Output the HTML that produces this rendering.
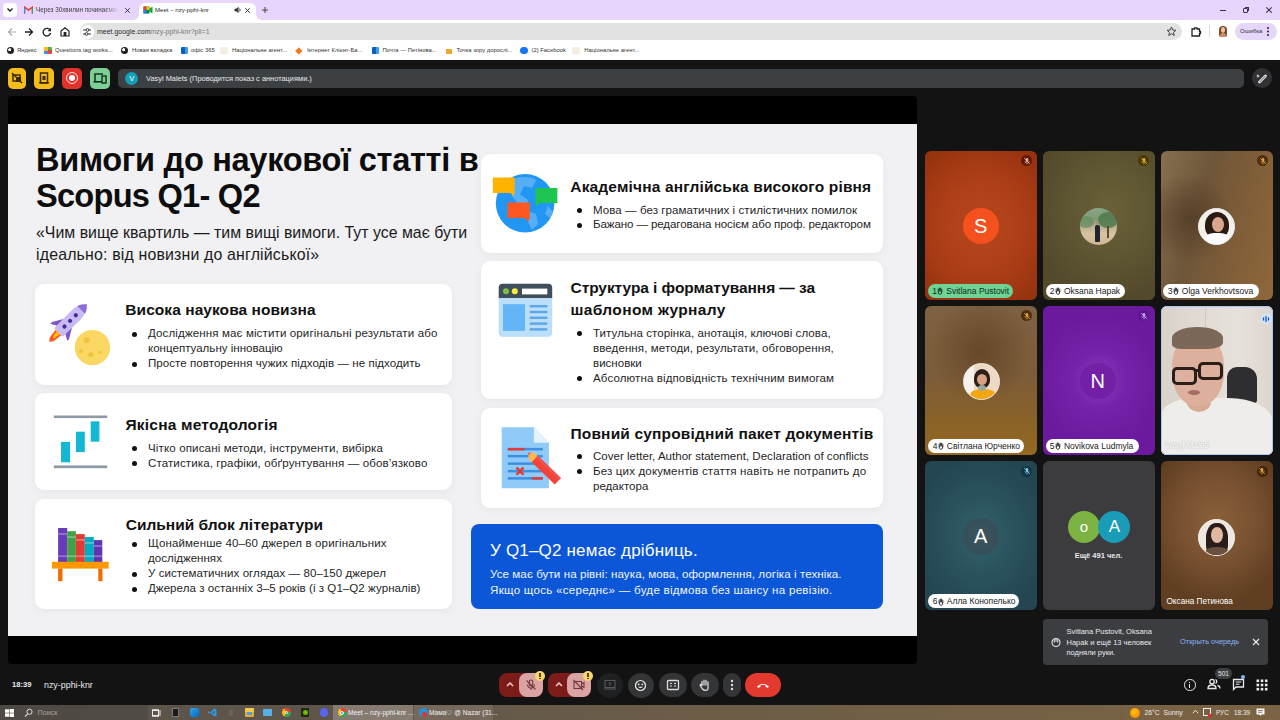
<!DOCTYPE html>
<html><head><meta charset="utf-8">
<style>
*{margin:0;padding:0;box-sizing:border-box}
html,body{width:1280px;height:720px;overflow:hidden;background:#131314;font-family:"Liberation Sans",sans-serif;position:relative}
.a{position:absolute}
.nw{white-space:nowrap}
#tabs{left:0;top:0;width:1280px;height:20px;background:#e8d5fb}
#toolbar{left:0;top:20px;width:1280px;height:40px;background:#fff}
#addr{left:80px;top:23px;width:1102px;height:17px;border-radius:9px;background:#e2e2e2}
#video{left:8px;top:96px;width:909px;height:568px;background:#000;border-radius:4px}
#slide{left:8px;top:124px;width:909px;height:512px;background:#f1f1f3}
.card{position:absolute;background:#fff;border-radius:9px;box-shadow:0 2px 8px rgba(0,0,0,.05)}
.ct{position:absolute;margin-top:0.8px;font-weight:bold;font-size:15.5px;line-height:22.5px;color:#111;white-space:nowrap}
.ul{position:absolute;font-size:11.55px;color:#1f1f1f;line-height:15px}
.ul div{position:relative;white-space:nowrap}
.ul div.b:before{content:"";position:absolute;left:-16.2px;top:5.6px;width:5px;height:5px;border-radius:50%;background:#111}
#taskbar{left:0;top:705px;width:1280px;height:15px;background:linear-gradient(90deg,#5a5249 0%,#5f564b 25%,#6a5c48 50%,#736045 75%,#7b6344 100%)}
.tile{position:absolute;border-radius:6px;overflow:hidden}
.name{position:absolute;left:3px;top:133px;height:14.5px;border-radius:7.5px;background:#fff;color:#111;font-size:9px;line-height:14.5px;padding:0 5px;white-space:nowrap}
.bk{position:absolute;top:4.8px;width:7.6px;height:7.6px;border-radius:50%}
.pill{position:absolute;height:14px;border-radius:7px;font-size:8.5px;line-height:14px;white-space:nowrap}
.av{position:absolute;border-radius:50%;color:#fff;text-align:center;overflow:hidden}
</style></head><body>
<div id="tabs" class="a"></div>
<div id="toolbar" class="a"></div>
<div id="addr" class="a"></div>

<!-- browser chrome -->
<div class="a" style="left:3px;top:3px;width:14px;height:14px;border-radius:4px;background:#fff"></div>
<svg class="a" style="left:6px;top:7px" width="8" height="6"><path d="M1.5,1.5 L4,4 L6.5,1.5" stroke="#222" stroke-width="1.4" fill="none"/></svg>
<!-- gmail tab -->
<svg class="a" style="left:24px;top:6px" width="9" height="8" viewBox="0 0 9 8"><path d="M0.5,7.5 V1 L4.5,4.2 L8.5,1 V7.5" stroke="#ea4335" stroke-width="1.5" fill="none"/><path d="M0.5,7.5 V2" stroke="#4285f4" stroke-width="1.5"/><path d="M8.5,7.5 V2" stroke="#34a853" stroke-width="1.5"/></svg>
<div class="a nw" style="left:36px;top:5px;font-size:6.3px;line-height:10px;color:#3a3a3a;width:84px;overflow:hidden;-webkit-mask-image:linear-gradient(90deg,#000 80%,transparent)">Через 30хвилин починаємо! ·</div>
<svg class="a" style="left:124px;top:6.5px" width="7" height="7"><path d="M1.3,1.3 L5.7,5.7 M5.7,1.3 L1.3,5.7" stroke="#333" stroke-width="1"/></svg>
<!-- active tab -->
<div class="a" style="left:139px;top:3px;width:117px;height:18px;border-radius:6px 6px 0 0;background:#fff"></div>
<div class="a" style="left:133px;top:14px;width:6px;height:6px;background:radial-gradient(circle at 0 0,#e8d5fb 6px,#fff 6px)"></div>
<div class="a" style="left:256px;top:14px;width:6px;height:6px;background:radial-gradient(circle at 100% 0,#e8d5fb 6px,#fff 6px)"></div>
<svg class="a" style="left:143px;top:5px" width="10" height="10" viewBox="0 0 10 10"><rect x="0.5" y="1.5" width="6" height="7" fill="#00832d"/><rect x="0.5" y="1.5" width="3" height="3.5" fill="#ea4335"/><rect x="3.5" y="1.5" width="3" height="3.5" fill="#fbbc04"/><rect x="0.5" y="5" width="3" height="3.5" fill="#2684fc"/><path d="M6.5,3.5 L9.5,1.5 V8.5 L6.5,6.5 Z" fill="#00ac47"/></svg>
<div class="a nw" style="left:155px;top:5px;font-size:6.1px;line-height:10px;color:#2a2a2a">Meet – nzy-pphi-knr</div>
<svg class="a" style="left:234px;top:6px" width="8" height="8" viewBox="0 0 8 8"><path d="M0.5,2.8 H2.2 L4.5,0.8 V7.2 L2.2,5.2 H0.5 Z" fill="#333"/><path d="M5.6,2.5 Q6.8,4 5.6,5.5" stroke="#333" stroke-width="0.9" fill="none"/></svg>
<svg class="a" style="left:243.5px;top:6.5px" width="7" height="7"><path d="M1.3,1.3 L5.7,5.7 M5.7,1.3 L1.3,5.7" stroke="#333" stroke-width="1"/></svg>
<svg class="a" style="left:261px;top:6px" width="8" height="8"><path d="M4,1 V7 M1,4 H7" stroke="#444" stroke-width="1"/></svg>
<!-- window controls -->
<div class="a" style="left:1219.5px;top:9.6px;width:6px;height:1.1px;background:#3d3050"></div>
<div class="a" style="left:1243px;top:8.2px;width:4.6px;height:4.6px;border:1.1px solid #3d3050;border-radius:1px"></div><div class="a" style="left:1244.5px;top:7px;width:4px;height:4px;border-top:1.1px solid #3d3050;border-right:1.1px solid #3d3050;border-radius:0 1px 0 0"></div>
<svg class="a" style="left:1264.5px;top:6px" width="8" height="8"><path d="M1.3,1.3 L6.7,6.7 M6.7,1.3 L1.3,6.7" stroke="#3d3050" stroke-width="1.1"/></svg>
<!-- nav -->
<svg class="a" style="left:6px;top:26px" width="12" height="12" viewBox="0 0 12 12"><path d="M10,6 H2.5 M6,2.5 L2.5,6 L6,9.5" stroke="#a9a9a9" stroke-width="1.2" fill="none"/></svg>
<svg class="a" style="left:23px;top:26px" width="12" height="12" viewBox="0 0 12 12"><path d="M2,6 H9.5 M6,2.5 L9.5,6 L6,9.5" stroke="#222" stroke-width="1.3" fill="none"/></svg>
<svg class="a" style="left:41px;top:25.5px" width="12" height="12" viewBox="0 0 12 12"><path d="M9.3,4.5 A3.8,3.8 0 1 0 9.6,7" stroke="#222" stroke-width="1.3" fill="none"/><path d="M9.8,2 V5 H6.8" fill="#222"/><path d="M10,2.2 L10,5.2 L7,5.2 Z" fill="#222"/></svg>
<svg class="a" style="left:59px;top:25.5px" width="12" height="12" viewBox="0 0 12 12"><path d="M2,10 V5 L6,1.8 L10,5 V10 Z" stroke="#222" stroke-width="1.2" fill="none"/><rect x="4.6" y="6" width="2.8" height="4" fill="#222"/></svg>
<div class="a" style="left:80.5px;top:24.5px;width:13px;height:14px;border-radius:50%;background:#fff"></div><svg class="a" style="left:81px;top:25.5px" width="12" height="12" viewBox="0 0 12 12"><path d="M2,4 H5 M8,4 H10 M2,8 H4 M7,8 H10" stroke="#333" stroke-width="1.2"/><circle cx="6.5" cy="4" r="1.4" stroke="#333" fill="none" stroke-width="1"/><circle cx="5.5" cy="8" r="1.4" stroke="#333" fill="none" stroke-width="1"/></svg>
<div class="a nw" style="left:97px;top:26px;font-size:6.97px;line-height:11px;color:#2b2b2b">meet.google.com<span style="color:#777">/nzy-pphi-knr?pli=1</span></div>
<svg class="a" style="left:1166px;top:26px" width="11" height="11" viewBox="0 0 12 12"><path d="M6,1.2 L7.4,4.4 L10.8,4.7 L8.2,6.9 L9,10.3 L6,8.5 L3,10.3 L3.8,6.9 L1.2,4.7 L4.6,4.4 Z" stroke="#333" stroke-width="1" fill="none"/></svg>
<svg class="a" style="left:1190px;top:25.5px" width="12" height="12" viewBox="0 0 12 12"><path d="M2,3 H4.5 V1.8 H7 V3 H9.5 V5.5 H10.5 V7.5 H9.5 V10 H2 Z" stroke="#222" stroke-width="1.3" fill="none"/></svg>
<div class="a" style="left:1209px;top:25px;width:1px;height:12px;background:#ddd"></div>
<div class="a" style="left:1219px;top:25.5px;width:8px;height:11px;border-radius:4px 4px 2px 2px;background:#7a4a2a"></div><div class="a" style="left:1220.8px;top:27px;width:4.4px;height:6px;border-radius:50%;background:#eec2a4"></div><div class="a" style="left:1220px;top:33px;width:6px;height:3.5px;border-radius:3px 3px 0 0;background:#c98d6a"></div>
<div class="a" style="left:1234.5px;top:23px;width:42px;height:17px;border-radius:9px;background:#e6d6fa"></div>
<div class="a nw" style="left:1240px;top:27px;font-size:6px;line-height:9px;color:#333">Ошибка</div>
<svg class="a" style="left:1266px;top:26px" width="4" height="11"><circle cx="2" cy="2" r="1.1" fill="#333"/><circle cx="2" cy="5.5" r="1.1" fill="#333"/><circle cx="2" cy="9" r="1.1" fill="#333"/></svg>
<!-- bookmarks -->
<div class="a" style="left:0;top:42px;width:1280px;height:17px;font-size:5.85px;line-height:17px;color:#333">
 <i class="bk" style="left:6.5px;background:radial-gradient(circle at 40% 40%,#fff 0 1.3px,#222 1.8px)"></i><span class="a nw" style="left:17px">Яндекс</span>
 <i class="bk" style="left:44px;border-radius:1px;background:conic-gradient(#4caf50 0 25%,#ea4335 0 50%,#4285f4 0 75%,#fbbc04 0)"></i><span class="a nw" style="left:55px">Questions tag works...</span>
 <i class="bk" style="left:120.8px;background:radial-gradient(circle at 40% 40%,#fff 0 1.3px,#222 1.8px)"></i><span class="a nw" style="left:132px">Новая вкладка</span>
 <i class="bk" style="left:180.5px;border-radius:1px;background:linear-gradient(90deg,#0a5fc0 0 55%,#3c9be8 55%)"></i><span class="a nw" style="left:191px">офіс 365</span>
 <i class="bk" style="left:220px;border-radius:1px;background:#f1ead8;opacity:.8"></i><span class="a nw" style="left:232px">Національне агент...</span>
 <i class="bk" style="left:295px;border-radius:1px;background:#f47a20;transform:rotate(45deg) scale(.65)"></i><span class="a nw" style="left:307px">Інтернет Клієнт-Ба...</span>
 <i class="bk" style="left:371.5px;border-radius:1px;background:linear-gradient(90deg,#0a5fc0 0 55%,#3c9be8 55%)"></i><span class="a nw" style="left:382.4px">Почта — Петінова...</span>
 <i class="bk" style="left:446px;border-radius:0;background:linear-gradient(#fff 0 35%,#f0a830 35%);width:6px"></i><span class="a nw" style="left:456.4px">Точка зору дорослі...</span>
 <i class="bk" style="left:520px;background:#1877f2"></i><span class="a nw" style="left:531.5px">(2) Facebook</span>
 <i class="bk" style="left:572px;border-radius:1px;background:#f1ead8;opacity:.8"></i><span class="a nw" style="left:584.3px">Національне агент...</span>
</div>

<!-- meet top bar -->
<div class="a" style="left:8px;top:68px;width:18px;height:20.5px;border-radius:5px;background:#f6bd1a"></div>
<svg class="a" style="left:11px;top:72px" width="12" height="12" viewBox="0 0 12 12"><rect x="2" y="3" width="7" height="6" fill="none" stroke="#3a2a00" stroke-width="1.5"/><path d="M1,1 L11,11" stroke="#3a2a00" stroke-width="1.4"/><rect x="5" y="5" width="5" height="5" fill="#3a2a00"/></svg>
<div class="a" style="left:34px;top:68px;width:20px;height:20.5px;border-radius:5px;background:#f6bd1a"></div>
<svg class="a" style="left:38px;top:72px" width="12" height="12" viewBox="0 0 12 12"><rect x="2.5" y="1" width="7" height="10" fill="none" stroke="#3a2a00" stroke-width="1.5"/><rect x="4.5" y="4" width="3" height="4" fill="#3a2a00"/><rect x="1" y="10" width="10" height="1.3" fill="#3a2a00"/></svg>
<div class="a" style="left:62px;top:68px;width:20px;height:20.5px;border-radius:5px;background:#e0332c"></div>
<div class="a" style="left:65.8px;top:72px;width:12.4px;height:12.4px;border-radius:50%;border:1.6px solid #f6e0de"></div>
<div class="a" style="left:68.8px;top:75px;width:6.4px;height:6.4px;border-radius:50%;background:#fff"></div>
<div class="a" style="left:90px;top:68px;width:20px;height:20.5px;border-radius:5px;background:#7ecf95"></div>
<svg class="a" style="left:93px;top:72px" width="14" height="12" viewBox="0 0 14 12"><path d="M2,9 V2 H10" stroke="#10301a" stroke-width="1.5" fill="none"/><rect x="0.5" y="9" width="8" height="1.6" fill="#10301a"/><rect x="9" y="4" width="4" height="7" fill="none" stroke="#10301a" stroke-width="1.4"/></svg>
<div class="a" style="left:118px;top:68.5px;width:1126px;height:19.5px;border-radius:5px;background:#3c4043"></div>
<div class="a" style="left:125.3px;top:72.2px;width:13px;height:13px;border-radius:50%;background:#12a0b8;color:#fff;font-size:7.5px;line-height:13px;text-align:center">V</div>
<div class="a nw" style="left:146px;top:73px;font-size:7.43px;line-height:11px;color:#e8eaed">Vasyl Malets (Проводится показ с аннотациями.)</div>
<div class="a" style="left:1252px;top:68.3px;width:20px;height:20px;border-radius:50%;background:#303134"></div>
<svg class="a" style="left:1255px;top:71.5px" width="14" height="14" viewBox="0 0 14 14"><path d="M4.5,10 L10.5,4" stroke="#eee" stroke-width="2.6" stroke-linecap="round"/><path d="M4.5,10 L10.5,4" stroke="#303134" stroke-width="0.8"/><path d="M3,2 L3.6,3.4 L5,4 L3.6,4.6 L3,6 L2.4,4.6 L1,4 L2.4,3.4 Z" fill="#eee"/></svg>

<div id="video" class="a"></div>
<div id="slide" class="a"></div>

<!-- title -->
<div class="a nw" style="left:36px;top:141.5px;font-size:32.6px;font-weight:bold;line-height:36px;letter-spacing:-0.32px;color:#0d0d0d">Вимоги до наукової статті в<br><span style="letter-spacing:-0.75px">Scopus Q1- Q2</span></div>
<div class="a nw" style="left:36px;top:222px;font-size:15.9px;line-height:21.5px;color:#1a1a1a">«Чим вище квартиль — тим вищі вимоги. Тут усе має бути<br><span style="letter-spacing:0.167px">ідеально: від новизни до англійської»</span></div>

<!-- left cards -->
<div class="card" style="left:35px;top:283.5px;width:417px;height:101px"></div>
<div class="card" style="left:35px;top:392.7px;width:417px;height:97.3px"></div>
<div class="card" style="left:35px;top:499px;width:417px;height:110px"></div>
<!-- right cards -->
<div class="card" style="left:480.5px;top:153.5px;width:402px;height:99.3px"></div>
<div class="card" style="left:480.5px;top:261px;width:402px;height:138px"></div>
<div class="card" style="left:480.5px;top:408px;width:402px;height:100px"></div>
<div class="a" style="left:471px;top:523.7px;width:411.5px;height:85.5px;background:#0b57d8;border-radius:8px"></div>

<div class="ct" style="left:125.3px;top:298.4px"><span style="letter-spacing:0.060px">Висока наукова новизна</span></div>
<div class="ul" style="left:148px;top:326px">
  <div class="b"><span style="letter-spacing:0.117px">Дослідження має містити оригінальні результати або</span></div>
  <div>концептуальну інновацію</div>
  <div class="b"><span style="letter-spacing:0.043px">Просте повторення чужих підходів — не підходить</span></div>
</div>
<div class="ct" style="left:125.5px;top:413.4px"><span style="letter-spacing:0.206px">Якісна методологія</span></div>
<div class="ul" style="left:148px;top:440.5px">
  <div class="b"><span style="letter-spacing:0.134px">Чітко описані методи, інструменти, вибірка</span></div>
  <div class="b"><span style="letter-spacing:0.101px">Статистика, графіки, обґрунтування — обов’язково</span></div>
</div>
<div class="ct" style="left:125.7px;top:513.4px"><span style="letter-spacing:0.011px">Сильний блок літератури</span></div>
<div class="ul" style="left:148px;top:536px">
  <div class="b"><span style="letter-spacing:0.115px">Щонайменше 40–60 джерел в оригінальних</span></div>
  <div>дослідженнях</div>
  <div class="b"><span style="letter-spacing:0.053px">У систематичних оглядах — 80–150 джерел</span></div>
  <div class="b"><span style="letter-spacing:0.047px">Джерела з останніх 3–5 років (і з Q1–Q2 журналів)</span></div>
</div>

<div class="ct" style="left:570.3px;top:175.4px"><span style="letter-spacing:0.157px">Академічна англійська високого рівня</span></div>
<div class="ul" style="left:593px;top:202.75px;line-height:14.5px">
  <div class="b"><span style="letter-spacing:0.051px">Мова — без граматичних і стилістичних помилок</span></div>
  <div class="b"><span style="letter-spacing:-0.103px">Бажано — редагована носієм або проф. редактором</span></div>
</div>
<div class="ct" style="left:570.5px;top:275.9px"><span style="letter-spacing:-0.062px">Структура і форматування — за</span><br><span style="letter-spacing:0.367px">шаблоном журналу</span></div>
<div class="ul" style="left:593px;top:325.5px">
  <div class="b"><span style="letter-spacing:0.054px">Титульна сторінка, анотація, ключові слова,</span></div>
  <div><span style="letter-spacing:0.085px">введення, методи, результати, обговорення,</span></div>
  <div>висновки</div>
  <div class="b"><span style="letter-spacing:0.106px">Абсолютна відповідність технічним вимогам</span></div>
</div>
<div class="ct" style="left:570.5px;top:422.1px"><span style="letter-spacing:0.162px">Повний супровідний пакет документів</span></div>
<div class="ul" style="left:593px;top:448.5px">
  <div class="b"><span style="letter-spacing:0.005px">Cover letter, Author statement, Declaration of conflicts</span></div>
  <div class="b"><span style="letter-spacing:0.144px">Без цих документів стаття навіть не потрапить до</span></div>
  <div>редактора</div>
</div>

<div class="a nw" style="left:490px;top:541.2px;font-size:17px;line-height:20px;color:#fff"><span style="letter-spacing:0.186px">У Q1–Q2 немає дрібниць.</span></div>
<div class="a nw" style="left:490px;top:566.1px;font-size:11.6px;line-height:15.75px;color:#f2f5ff"><span style="letter-spacing:0.067px">Усе має бути на рівні: наука, мова, оформлення, логіка і техніка.</span><br><span style="letter-spacing:0.260px">Якщо щось «середнє» — буде відмова без шансу на ревізію.</span></div>


<!-- slide icons -->
<svg class="a" style="left:0;top:0" width="1280" height="720" viewBox="0 0 1280 720">
  <!-- rocket -->
  <g transform="translate(72.6,318.4) rotate(45)">
    <path d="M-4,20 L4,20 L2.5,30 L0,33 L-2.5,30 Z" fill="#ff5722"/>
    <path d="M-2.2,20 L2.2,20 L1.2,26 L0,28 L-1.2,26 Z" fill="#ffc107"/>
    <path d="M-5.5,6 L-12,17 L-12,19.5 L-5.5,16 Z" fill="#7e57c2"/>
    <path d="M5.5,6 L12,17 L12,19.5 L5.5,16 Z" fill="#7e57c2"/>
    <path d="M0,-20 C5,-16 6.5,-9 6.5,-2 L6,20 L-6,20 L-6.5,-2 C-6.5,-9 -5,-16 0,-20 Z" fill="#c8baf3"/>
    <path d="M0,-20 C3.5,-17 5,-14 5.6,-12 L-5.6,-12 C-5,-14 -3.5,-17 0,-20 Z" fill="#8c6fd6"/>
    <circle cx="0" cy="-4.5" r="2.1" fill="#4527a0"/>
    <circle cx="0" cy="3.5" r="2.1" fill="#4527a0"/>
    <circle cx="0" cy="11.5" r="2.1" fill="#4527a0"/>
  </g>
  <!-- moon -->
  <circle cx="92.4" cy="347.6" r="17.7" fill="#fbd764"/>
  <circle cx="86.7" cy="340.3" r="3" fill="#f1c43d"/>
  <circle cx="80.9" cy="351.2" r="2" fill="#f1c43d"/>
  <circle cx="90.8" cy="354.4" r="2.5" fill="#f1c43d"/>
  <circle cx="99.7" cy="352.3" r="1.7" fill="#f1c43d"/>
  <!-- methodology -->
  <rect x="53.8" y="415.5" width="53.4" height="2.6" fill="#8f9ba4"/>
  <rect x="53.8" y="465.4" width="53.4" height="2.8" fill="#8f9ba4"/>
  <rect x="61" y="441.9" width="9.1" height="20.4" fill="#14b8d4"/>
  <rect x="75.9" y="431.7" width="8.9" height="20.4" fill="#14b8d4"/>
  <rect x="90.7" y="421.3" width="8.7" height="20.4" fill="#14b8d4"/>
  <!-- books -->
  <rect x="58.1" y="528" width="9.1" height="34" fill="#673ab7"/>
  <rect x="67.2" y="531.2" width="8.7" height="30.8" fill="#43a047"/>
  <rect x="75.9" y="534.1" width="8.9" height="27.9" fill="#e53935"/>
  <rect x="84.8" y="537" width="9" height="25" fill="#00acc1"/>
  <rect x="93.8" y="540.1" width="8.5" height="21.9" fill="#5e35b1"/>
  <rect x="58.1" y="533" width="9.1" height="1.8" fill="#ffffff" opacity=".3"/><rect x="67.2" y="536.2" width="8.7" height="1.8" fill="#ffffff" opacity=".3"/><rect x="75.9" y="539.1" width="8.9" height="1.8" fill="#ffffff" opacity=".3"/><rect x="84.8" y="542" width="9" height="1.8" fill="#ffffff" opacity=".3"/><rect x="93.8" y="545.1" width="8.5" height="1.8" fill="#ffffff" opacity=".3"/>
  <rect x="58.1" y="555.3" width="44.2" height="1.8" fill="#ffffff" opacity=".3"/>
  <rect x="52" y="561.8" width="56.7" height="6.8" fill="#ff9800"/>
  <rect x="58.1" y="568.6" width="4.4" height="12.6" fill="#ef6c00"/>
  <rect x="98.3" y="568.6" width="4.2" height="12.6" fill="#ef6c00"/>
  <!-- globe -->
  <circle cx="525.1" cy="203.3" r="29.3" fill="#2196f3"/>
  <path d="M512,180 C518,176 530,176 536,180 L532,188 L524,186 L520,194 L528,200 L526,208 L518,204 L512,196 Z" fill="#64b5f6" opacity=".8"/>
  <path d="M526,210 L536,214 L538,224 L532,230 L528,222 Z" fill="#64b5f6" opacity=".8"/>
  <path d="M548,206 L553,212 L550,218 L545,214 Z" fill="#64b5f6" opacity=".8"/>
  <path d="M492.8,177.5 H514.7 V193.1 L513.5,196.3 L510.5,193.1 H492.8 Z" fill="#ffb300"/>
  <path d="M535.5,187.9 H557.4 V203 H539.5 L536.5,206 L535.5,203 Z" fill="#1ec552"/>
  <path d="M507.4,202.5 H529.8 V218.1 L528,221.8 L525,218.1 H507.4 Z" fill="#ff5722"/>
  <!-- browser window -->
  <path d="M498.7,287.7 Q498.7,283.7 502.7,283.7 H548.2 Q552.2,283.7 552.2,287.7 V298.3 H498.7 Z" fill="#3f4e5b"/>
  <path d="M498.7,298.3 H552.2 V332.7 Q552.2,336.7 548.2,336.7 H502.7 Q498.7,336.7 498.7,332.7 Z" fill="#bbdefb"/>
  <circle cx="506" cy="291.3" r="3" fill="#7cc242"/>
  <circle cx="514.8" cy="291.3" r="3" fill="#ffeb3b"/>
  <rect x="522" y="288.6" width="25.3" height="5.8" fill="#ffffff"/>
  <rect x="503" y="304.2" width="22" height="26.7" fill="#64b5f6"/>
  <rect x="529.8" y="305" width="17.5" height="2.4" fill="#5ea6e6"/>
  <rect x="529.8" y="310.8" width="17.5" height="2.4" fill="#5ea6e6"/>
  <rect x="529.8" y="316.6" width="17.5" height="2.4" fill="#5ea6e6"/>
  <rect x="529.8" y="322.4" width="17.5" height="2.4" fill="#5ea6e6"/>
  <rect x="529.8" y="328.2" width="17.5" height="2.4" fill="#5ea6e6"/>
  <!-- document -->
  <path d="M501.7,427.2 H533.9 L548.9,442.8 V488.3 H501.7 Z" fill="#90caf9"/>
  <path d="M533.9,427.2 L548.9,442.8 H533.9 Z" fill="#e3f2fd"/>
  <rect x="507.8" y="447.9" width="35" height="2.5" fill="#3d8fe0"/>
  <rect x="507.8" y="447.9" width="16.6" height="2.5" fill="#e53935"/>
  <rect x="507.8" y="454.9" width="35" height="2.5" fill="#3d8fe0"/>
  <rect x="507.8" y="462.4" width="35" height="2.5" fill="#3d8fe0"/>
  <rect x="507.8" y="469.9" width="35" height="2.5" fill="#3d8fe0"/>
  <rect x="507.8" y="477.1" width="35" height="2.5" fill="#3d8fe0"/>
  <rect x="531.7" y="477.1" width="11.1" height="2.5" fill="#e53935"/>
  <path d="M516.5,467.6 L523.5,474.6 M523.5,467.6 L516.5,474.6" stroke="#e53935" stroke-width="2.6"/>
  <g transform="translate(528.3,452.8) rotate(43.9)">
    <path d="M0,0 L4.5,-4.2 H9 V4.2 H4.5 Z" fill="#ffb74d"/>
    <path d="M0,0 L1.8,-1.7 V1.7 Z" fill="#e53935"/>
    <rect x="9" y="-4.4" width="32" height="8.8" fill="#f44336"/>
    <rect x="9" y="-4.4" width="32" height="2.8" fill="#ef5350"/>
  </g>
</svg>


<!-- participants -->
<div class="tile" style="left:925px;top:151.2px;width:112px;height:149px;background:radial-gradient(ellipse 70% 60% at 50% 50%,#b9471d 0%,#ab3d16 60%,#96330f 100%);"><div class="av" style="left:37.5px;top:56.8px;background:#f4511e;font-size:20px;line-height:36.4px;width:36.4px;height:36.4px">S</div><div class="pill" style="left:2.9px;top:132.7px;width:85.4px;background:#6fd393;color:#0d2e18"><span class="a" style="left:4.3px">1</span><svg width="6" height="8" viewBox="0 0 6 8" style="position:absolute;left:9.4px;top:3.5px"><path d="M1.2,4.5 V2 M2.4,4 V1 M3.6,4 V1.2 M4.8,4.5 V2.2 M1.2,4.5 Q0.6,6.8 2.8,7.4 Q5,7.4 4.8,4.5" stroke="#0d2e18" stroke-width="0.9" fill="none" stroke-linecap="round"/></svg><span class="a" style="left:18.4px">Svitlana Pustovit</span></div><div class="a" style="left:96.2px;top:4.300000000000001px;width:11px;height:11px;border-radius:50%;background:rgba(80,16,6,.75)"></div><svg class="a" style="left:97.7px;top:5.800000000000001px" width="8" height="8" viewBox="0 0 8 8"><rect x="2.8" y="1" width="2.4" height="4" rx="1.2" fill="#e8b0a0"/><path d="M1.8,4 Q2,6.2 4,6.2 Q6,6.2 6.2,4 M4,6.2 V7.4" stroke="#e8b0a0" stroke-width="0.7" fill="none"/><path d="M1,1 L7,7" stroke="#e8b0a0" stroke-width="0.8"/></svg></div>
<div class="tile" style="left:1042.5px;top:151.2px;width:112px;height:149px;background:radial-gradient(ellipse 70% 60% at 60% 40%,#6a6038 0%,#5f5633 50%,#524a2b 100%);"><div class="av" style="left:37px;top:56.4px;width:37.5px;height:37.5px;background:linear-gradient(180deg,#8aa488 0%,#7d9a74 30%,#b9b08e 50%,#d8c4a2 70%,#cdb593 100%)"><div class="a" style="left:18px;top:4px;width:20px;height:16px;border-radius:50%;background:#4f7a4c;opacity:.85"></div><div class="a" style="left:-2px;top:8px;width:16px;height:12px;border-radius:50%;background:#6c8f66;opacity:.8"></div><div class="a" style="left:27px;top:18px;width:2px;height:12px;background:#5a4a3a"></div><div class="a" style="left:15.5px;top:17px;width:4.5px;height:17px;border-radius:2px 2px 1px 1px;background:#1e2430"></div><div class="a" style="left:16px;top:13px;width:3.5px;height:4px;border-radius:50%;background:#b88a78"></div></div><div class="pill" style="left:3px;top:132.7px;width:79px;background:#fff;color:#1a1a1a"><span class="a" style="left:4.3px">2</span><svg width="6" height="8" viewBox="0 0 6 8" style="position:absolute;left:9.4px;top:3.5px"><path d="M1.2,4.5 V2 M2.4,4 V1 M3.6,4 V1.2 M4.8,4.5 V2.2 M1.2,4.5 Q0.6,6.8 2.8,7.4 Q5,7.4 4.8,4.5" stroke="#1a1a1a" stroke-width="0.9" fill="none" stroke-linecap="round"/></svg><span class="a" style="left:18.4px">Oksana Hapak</span></div><div class="a" style="left:95.5px;top:4.300000000000001px;width:11px;height:11px;border-radius:50%;background:rgba(70,50,0,.8)"></div><svg class="a" style="left:97px;top:5.800000000000001px" width="8" height="8" viewBox="0 0 8 8"><rect x="2.8" y="1" width="2.4" height="4" rx="1.2" fill="#e0b030"/><path d="M1.8,4 Q2,6.2 4,6.2 Q6,6.2 6.2,4 M4,6.2 V7.4" stroke="#e0b030" stroke-width="0.7" fill="none"/><path d="M1,1 L7,7" stroke="#e0b030" stroke-width="0.8"/></svg></div>
<div class="tile" style="left:1160.5px;top:151.2px;width:112px;height:149px;background:radial-gradient(ellipse 40% 30% at 25% 45%,rgba(80,58,36,.8) 0%,rgba(80,58,36,0) 100%),linear-gradient(105deg,#86704f 0%,#6e563a 35%,#7c5c38 60%,#8f683a 100%);"><div class="av" style="left:37px;top:56.8px;width:37px;height:37px;background:#f4efe8;border:1.5px solid #eee"><div class="a" style="left:6px;top:3px;width:24px;height:26px;border-radius:50% 50% 40% 40%;background:#2a1a14"></div><div class="a" style="left:13px;top:8px;width:12px;height:15px;border-radius:50%;background:#d9a88c"></div><div class="a" style="left:5px;top:24px;width:26px;height:14px;border-radius:40% 40% 0 0;background:#fafafa"></div></div><div class="pill" style="left:2.9px;top:132.7px;width:96px;background:#fff;color:#1a1a1a"><span class="a" style="left:4.3px">3</span><svg width="6" height="8" viewBox="0 0 6 8" style="position:absolute;left:9.4px;top:3.5px"><path d="M1.2,4.5 V2 M2.4,4 V1 M3.6,4 V1.2 M4.8,4.5 V2.2 M1.2,4.5 Q0.6,6.8 2.8,7.4 Q5,7.4 4.8,4.5" stroke="#1a1a1a" stroke-width="0.9" fill="none" stroke-linecap="round"/></svg><span class="a" style="left:18.4px">Olga Verkhovtsova</span></div><div class="a" style="left:96.5px;top:4.300000000000001px;width:11px;height:11px;border-radius:50%;background:rgba(60,30,0,.75)"></div><svg class="a" style="left:98px;top:5.800000000000001px" width="8" height="8" viewBox="0 0 8 8"><rect x="2.8" y="1" width="2.4" height="4" rx="1.2" fill="#e0a040"/><path d="M1.8,4 Q2,6.2 4,6.2 Q6,6.2 6.2,4 M4,6.2 V7.4" stroke="#e0a040" stroke-width="0.7" fill="none"/><path d="M1,1 L7,7" stroke="#e0a040" stroke-width="0.8"/></svg></div>
<div class="tile" style="left:925px;top:306px;width:112px;height:149px;background:radial-gradient(ellipse 45% 35% at 50% 30%,rgba(100,70,40,.9) 0%,rgba(100,70,40,0) 100%),linear-gradient(180deg,#7e6142 0%,#7b5c3a 45%,#8a6228 78%,#946822 100%);"><div class="av" style="left:37.5px;top:56.8px;width:37px;height:37px;background:linear-gradient(90deg,#f6f1ea 0 30%,#efd9c5 30%);border:1px solid #f0e8e0"><div class="a" style="left:10px;top:5px;width:16px;height:19px;border-radius:50% 50% 40% 40%;background:#2b1d18"></div><div class="a" style="left:13px;top:10px;width:10px;height:11px;border-radius:50%;background:#d8a080"></div><div class="a" style="left:6px;top:25px;width:26px;height:14px;border-radius:45% 45% 0 0;background:#f3a712"></div><div class="a" style="left:14px;top:21px;width:8px;height:6px;border-radius:50%;background:#9aa8a0"></div></div><div class="pill" style="left:3.4px;top:132.7px;width:95.6px;background:#fff;color:#1a1a1a"><span class="a" style="left:4.3px">4</span><svg width="6" height="8" viewBox="0 0 6 8" style="position:absolute;left:9.4px;top:3.5px"><path d="M1.2,4.5 V2 M2.4,4 V1 M3.6,4 V1.2 M4.8,4.5 V2.2 M1.2,4.5 Q0.6,6.8 2.8,7.4 Q5,7.4 4.8,4.5" stroke="#1a1a1a" stroke-width="0.9" fill="none" stroke-linecap="round"/></svg><span class="a" style="left:18.4px">Світлана Юрченко</span></div><div class="a" style="left:96.0px;top:4.300000000000001px;width:11px;height:11px;border-radius:50%;background:rgba(60,30,0,.75)"></div><svg class="a" style="left:97.5px;top:5.800000000000001px" width="8" height="8" viewBox="0 0 8 8"><rect x="2.8" y="1" width="2.4" height="4" rx="1.2" fill="#e0a040"/><path d="M1.8,4 Q2,6.2 4,6.2 Q6,6.2 6.2,4 M4,6.2 V7.4" stroke="#e0a040" stroke-width="0.7" fill="none"/><path d="M1,1 L7,7" stroke="#e0a040" stroke-width="0.8"/></svg></div>
<div class="tile" style="left:1042.5px;top:306px;width:112px;height:149px;background:radial-gradient(ellipse 55% 45% at 50% 50%,#8a3cc0 0%,#7422a8 45%,#6b1a9e 100%);"><div class="av" style="left:37px;top:56.8px;background:#7420a6;font-size:20px;line-height:36.4px;width:36.4px;height:36.4px">N</div><div class="pill" style="left:3px;top:132.7px;width:93.8px;background:#fff;color:#1a1a1a"><span class="a" style="left:4.3px">5</span><svg width="6" height="8" viewBox="0 0 6 8" style="position:absolute;left:9.4px;top:3.5px"><path d="M1.2,4.5 V2 M2.4,4 V1 M3.6,4 V1.2 M4.8,4.5 V2.2 M1.2,4.5 Q0.6,6.8 2.8,7.4 Q5,7.4 4.8,4.5" stroke="#1a1a1a" stroke-width="0.9" fill="none" stroke-linecap="round"/></svg><span class="a" style="left:18.4px">Novikova Ludmyla</span></div><div class="a" style="left:95.5px;top:4.300000000000001px;width:11px;height:11px;border-radius:50%;background:rgba(90,20,140,.8)"></div><svg class="a" style="left:97px;top:5.800000000000001px" width="8" height="8" viewBox="0 0 8 8"><rect x="2.8" y="1" width="2.4" height="4" rx="1.2" fill="#c9a0e8"/><path d="M1.8,4 Q2,6.2 4,6.2 Q6,6.2 6.2,4 M4,6.2 V7.4" stroke="#c9a0e8" stroke-width="0.7" fill="none"/><path d="M1,1 L7,7" stroke="#c9a0e8" stroke-width="0.8"/></svg></div>
<div class="tile" style="left:1160.5px;top:306px;width:112px;height:149px;background:#e2dcd5;"><div class="a" style="left:0;top:0;width:112px;height:149px;background:linear-gradient(90deg,#d8d2cb 0%,#e0dad3 30%,#e6e1da 70%,#dcd6cf 100%)"></div><div class="a" style="left:44px;top:0;width:1.5px;height:149px;background:#d0c9c1"></div><div class="a" style="left:66px;top:61px;width:30px;height:36px;border-radius:10px 12px 3px 3px;background:#2e2e30"></div><div class="a" style="left:0;top:92px;width:112px;height:60px;border-radius:30% 40% 0 0;background:#eeede9"></div><div class="a" style="left:26px;top:86px;width:24px;height:20px;border-radius:0 0 50% 50%;background:#d6ab96"></div><div class="a" style="left:11px;top:28px;width:52px;height:72px;border-radius:44% 44% 46% 46%;background:#dcb09c"></div><div class="a" style="left:11px;top:21px;width:51px;height:22px;border-radius:50% 50% 30% 20%;background:#7b6858"></div><div class="a" style="left:11px;top:61px;width:25px;height:18px;border-radius:5px;border:3.5px solid #2a1e18"></div><div class="a" style="left:37px;top:56px;width:25px;height:18px;border-radius:5px;border:3.5px solid #2a1e18"></div><div class="a" style="left:34px;top:63px;width:4px;height:3px;background:#2a1e18"></div><div class="a" style="left:27px;top:84px;width:12px;height:5px;border-radius:50%;background:#a86a64"></div><div class="a" style="left:100px;top:7px;width:11px;height:11px;border-radius:50%;background:#d3e3fd"></div><svg class="a" style="left:101.5px;top:8.5px" width="8" height="8"><path d="M1.5,3 V5 M4,1.5 V6.5 M6.5,3 V5" stroke="#0b57d0" stroke-width="1.3" stroke-linecap="round"/></svg><div class="a nw" style="left:4.5px;top:134px;font-size:8.2px;line-height:12px;color:#fff;text-shadow:0 0 2px rgba(0,0,0,.35)">Vasyl Maleti</div><div class="a" style="left:0;top:0;width:112px;height:149px;border-radius:6px;border:1.6px solid #a8c7fa"></div></div>
<div class="tile" style="left:925px;top:461.4px;width:112px;height:149px;background:radial-gradient(ellipse 60% 55% at 50% 50%,#33606c 0%,#2a525e 50%,#234652 100%);"><div class="av" style="left:37.5px;top:57px;background:radial-gradient(circle,#3f545c 0%,#34505a 70%,rgba(52,80,90,0) 100%);font-size:20px;line-height:36.4px;width:36.4px;height:36.4px">A</div><div class="pill" style="left:3.4px;top:132.7px;width:90.5px;background:#fff;color:#1a1a1a"><span class="a" style="left:4.3px">6</span><svg width="6" height="8" viewBox="0 0 6 8" style="position:absolute;left:9.4px;top:3.5px"><path d="M1.2,4.5 V2 M2.4,4 V1 M3.6,4 V1.2 M4.8,4.5 V2.2 M1.2,4.5 Q0.6,6.8 2.8,7.4 Q5,7.4 4.8,4.5" stroke="#1a1a1a" stroke-width="0.9" fill="none" stroke-linecap="round"/></svg><span class="a" style="left:18.4px">Алла Конопелько</span></div><div class="a" style="left:96.0px;top:4.300000000000001px;width:11px;height:11px;border-radius:50%;background:rgba(10,50,70,.8)"></div><svg class="a" style="left:97.5px;top:5.800000000000001px" width="8" height="8" viewBox="0 0 8 8"><rect x="2.8" y="1" width="2.4" height="4" rx="1.2" fill="#80c8e0"/><path d="M1.8,4 Q2,6.2 4,6.2 Q6,6.2 6.2,4 M4,6.2 V7.4" stroke="#80c8e0" stroke-width="0.7" fill="none"/><path d="M1,1 L7,7" stroke="#80c8e0" stroke-width="0.8"/></svg></div>
<div class="tile" style="left:1042.5px;top:461.4px;width:112px;height:149px;background:#3c3c3e;"><div class="av" style="left:25.5px;top:49.2px;background:#7cb342;font-size:15px;line-height:32px;width:32px;height:32px">o</div><div class="av" style="left:55.9px;top:49.2px;background:#1a9bb8;font-size:17px;line-height:32px;width:32px;height:32px">A</div><div class="a nw" style="left:0;top:89px;width:112px;text-align:center;font-size:7.5px;line-height:12px;color:#e8eaed;font-weight:bold">Ещё 491 чел.</div></div>
<div class="tile" style="left:1160.5px;top:461.4px;width:112px;height:149px;background:radial-gradient(ellipse 65% 55% at 50% 40%,#8a6038 0%,#7a5232 50%,#5f3e22 100%);"><div class="av" style="left:37px;top:57.5px;width:37px;height:37px;background:#efe8e0;border:1px solid #f5f0ea"><div class="a" style="left:7px;top:3px;width:22px;height:32px;border-radius:45% 45% 30% 30%;background:#2a1c18"></div><div class="a" style="left:12px;top:7px;width:12px;height:16px;border-radius:50%;background:#e0b8a0"></div><div class="a" style="left:6px;top:27px;width:24px;height:12px;border-radius:45% 45% 0 0;background:#6a5040"></div></div><div class="a nw" style="left:6px;top:135px;font-size:8.2px;line-height:12px;color:#fff">Оксана Петинова</div><div class="a" style="left:96.0px;top:4.300000000000001px;width:11px;height:11px;border-radius:50%;background:rgba(60,30,0,.8)"></div><svg class="a" style="left:97.5px;top:5.800000000000001px" width="8" height="8" viewBox="0 0 8 8"><rect x="2.8" y="1" width="2.4" height="4" rx="1.2" fill="#e0a040"/><path d="M1.8,4 Q2,6.2 4,6.2 Q6,6.2 6.2,4 M4,6.2 V7.4" stroke="#e0a040" stroke-width="0.7" fill="none"/><path d="M1,1 L7,7" stroke="#e0a040" stroke-width="0.8"/></svg></div>

<!-- bottom bar -->
<div class="a nw" style="left:12px;top:680px;font-size:7.6px;font-weight:bold;line-height:10px;color:#e8eaed">18:39</div>
<div class="a nw" style="left:44px;top:680px;font-size:8.9px;line-height:10px;color:#e8eaed">nzy-pphi-knr</div>
<div class="a" style="left:499px;top:673px;width:28px;height:24px;border-radius:8px 0 0 8px;background:#7c1c18"></div>
<div class="a" style="left:518.8px;top:673px;width:24.5px;height:24px;border-radius:8px;background:#dca3a3"></div>
<svg class="a" style="left:505px;top:681px" width="10" height="7"><path d="M2,5 L5,2 L8,5" stroke="#f0d0cc" stroke-width="1.5" fill="none"/></svg>
<svg class="a" style="left:524px;top:678px" width="14" height="14" viewBox="0 0 14 14"><rect x="5.3" y="2" width="3.4" height="6" rx="1.7" fill="none" stroke="#6e3a3e" stroke-width="1.1"/><path d="M3.5,6.5 Q3.8,10 7,10 Q10.2,10 10.5,6.5 M7,10 V12" stroke="#6e3a3e" stroke-width="1.1" fill="none"/><path d="M2.5,2.5 L11.5,11.5" stroke="#6e3a3e" stroke-width="1.1"/></svg>
<div class="a" style="left:535px;top:670.6px;width:10px;height:10px;border-radius:50%;background:#f8d86b"></div>
<div class="a" style="left:539.3px;top:672.5px;width:1.6px;height:4px;background:#5a4000"></div>
<div class="a" style="left:539.3px;top:677.5px;width:1.6px;height:1.5px;background:#5a4000"></div>

<div class="a" style="left:547.5px;top:673px;width:28px;height:24px;border-radius:8px 0 0 8px;background:#7c1c18"></div>
<div class="a" style="left:567px;top:673px;width:24.3px;height:24px;border-radius:8px;background:#dca3a3"></div>
<svg class="a" style="left:553.5px;top:681px" width="10" height="7"><path d="M2,5 L5,2 L8,5" stroke="#f0d0cc" stroke-width="1.5" fill="none"/></svg>
<svg class="a" style="left:572px;top:678px" width="14" height="14" viewBox="0 0 14 14"><rect x="2" y="3.5" width="7.5" height="7" fill="none" stroke="#6e3a3e" stroke-width="1.1"/><path d="M9.5,6 L12,4.5 V9.5 L9.5,8" stroke="#6e3a3e" stroke-width="1.1" fill="none"/><path d="M1.5,2 L11,12" stroke="#6e3a3e" stroke-width="1.1"/></svg>
<div class="a" style="left:583px;top:670.6px;width:10px;height:10px;border-radius:50%;background:#f8d86b"></div>
<div class="a" style="left:587.3px;top:672.5px;width:1.6px;height:4px;background:#5a4000"></div>
<div class="a" style="left:587.3px;top:677.5px;width:1.6px;height:1.5px;background:#5a4000"></div>

<div class="a" style="left:597px;top:672.5px;width:25.5px;height:25px;border-radius:50%;background:#1f2022"></div>
<svg class="a" style="left:603px;top:679px" width="14" height="12" viewBox="0 0 14 12"><rect x="2" y="1.5" width="10" height="7" fill="none" stroke="#55585c" stroke-width="1.1"/><path d="M1,10 H13" stroke="#55585c" stroke-width="1.1"/><path d="M5.5,5 L7,3.5 L8.5,5 M7,3.5 V7" stroke="#55585c" stroke-width="1"/></svg>
<div class="a" style="left:627.6px;top:672.5px;width:26px;height:25px;border-radius:50%;background:#333537"></div>
<svg class="a" style="left:634px;top:678.5px" width="13" height="13" viewBox="0 0 13 13"><circle cx="6.5" cy="6.5" r="5" fill="none" stroke="#eee" stroke-width="1.2"/><circle cx="4.7" cy="5.3" r="0.9" fill="#eee"/><circle cx="8.3" cy="5.3" r="0.9" fill="#eee"/><path d="M4,7.8 Q6.5,10.2 9,7.8 Z" fill="#eee"/></svg>
<div class="a" style="left:659.3px;top:673px;width:27.4px;height:24px;border-radius:12px;background:#333537"></div>
<svg class="a" style="left:666px;top:679px" width="14" height="12" viewBox="0 0 14 12"><rect x="1.5" y="1.5" width="11" height="9" rx="1" fill="none" stroke="#ddd" stroke-width="1.3"/><path d="M4,4.5 H6 M4,7 H6 M8,4.5 H10 M8,7 H10" stroke="#ddd" stroke-width="1.1"/></svg>
<div class="a" style="left:691px;top:673px;width:28px;height:24px;border-radius:12px;background:#333537"></div>
<svg class="a" style="left:698px;top:678px" width="14" height="14" viewBox="0 0 14 14"><path d="M4,7.5 V3.5 M6,7 V2.2 M8,7 V2.5 M10,7.5 V4 M4,7.5 L2.8,6.5 Q1.8,6.5 2.5,8 L4.5,11 Q6,12.5 8,12.3 Q10.5,12 10,8.5 V7" stroke="#ddd" stroke-width="1.3" fill="none" stroke-linecap="round"/></svg>
<div class="a" style="left:723.3px;top:673px;width:17.5px;height:24px;border-radius:9px;background:#333537"></div>
<svg class="a" style="left:729px;top:679px" width="6" height="12"><circle cx="3" cy="2" r="1.2" fill="#ddd"/><circle cx="3" cy="6" r="1.2" fill="#ddd"/><circle cx="3" cy="10" r="1.2" fill="#ddd"/></svg>
<div class="a" style="left:745.2px;top:673.2px;width:36px;height:23.5px;border-radius:12px;background:#e3392f"></div>
<svg class="a" style="left:755px;top:680px" width="16" height="10" viewBox="0 0 16 10"><path d="M2,6.5 Q8,1 14,6.5 L12.5,8 L10.5,6.5 V5.2 Q8,4.2 5.5,5.2 V6.5 L3.5,8 Z" fill="#fff"/></svg>

<!-- right bottom icons -->
<div class="a" style="left:1184px;top:679px;width:11.5px;height:11.5px;border-radius:50%;border:1.3px solid #e8eaed"></div>
<div class="a" style="left:1189.1px;top:681.5px;width:1.3px;height:1.3px;background:#e8eaed"></div>
<div class="a" style="left:1189.1px;top:683.5px;width:1.3px;height:4.2px;background:#e8eaed"></div>
<div class="a" style="left:1215px;top:668px;width:17px;height:11px;border-radius:6px;background:#3c4043;color:#e8eaed;font-size:6.5px;line-height:11px;text-align:center">501</div>
<svg class="a" style="left:1207px;top:678px" width="14" height="12" viewBox="0 0 14 12"><circle cx="5" cy="3.5" r="2.2" fill="none" stroke="#e8eaed" stroke-width="1.3"/><path d="M1,10.5 Q1,7 5,7 Q9,7 9,10.5 Z" fill="none" stroke="#e8eaed" stroke-width="1.3"/><path d="M8.5,1.5 A2.2,2.2 0 0 1 8.5,5.5 M10.5,7.3 Q13,8 13,10.5" stroke="#e8eaed" stroke-width="1.3" fill="none"/></svg>
<svg class="a" style="left:1232px;top:678px" width="13" height="13" viewBox="0 0 13 13"><path d="M1.5,1.5 H11.5 V9 H4 L1.5,11.5 Z" fill="none" stroke="#e8eaed" stroke-width="1.3"/><path d="M3.8,4 H9.2 M3.8,6.3 H7.5" stroke="#e8eaed" stroke-width="1.1"/></svg>
<div class="a" style="left:1240.5px;top:674.5px;width:4.5px;height:4.5px;border-radius:50%;background:#8ab4f8"></div>
<svg class="a" style="left:1256px;top:679px" width="12" height="12"><g fill="#e8eaed"><rect x="0.5" y="0.5" width="2.6" height="2.6"/><rect x="4.7" y="0.5" width="2.6" height="2.6"/><rect x="8.9" y="0.5" width="2.6" height="2.6"/><rect x="0.5" y="4.7" width="2.6" height="2.6"/><rect x="4.7" y="4.7" width="2.6" height="2.6"/><rect x="8.9" y="4.7" width="2.6" height="2.6"/><rect x="0.5" y="8.9" width="2.6" height="2.6"/><rect x="4.7" y="8.9" width="2.6" height="2.6"/><rect x="8.9" y="8.9" width="2.6" height="2.6"/></g></svg>

<!-- notification -->
<div class="a" style="left:1043px;top:619px;width:225px;height:46px;border-radius:4px;background:#3c3d40"></div>
<svg class="a" style="left:1051px;top:636px" width="10" height="12" viewBox="0 0 10 12"><circle cx="5" cy="6.5" r="4" fill="none" stroke="#e8eaed" stroke-width="1.1"/><path d="M3.2,6 V3.5 M5,5.5 V2.5 M6.8,6 V3.5" stroke="#e8eaed" stroke-width="1" stroke-linecap="round"/></svg>
<div class="a nw" style="left:1066.5px;top:627px;font-size:7.5px;line-height:10.5px;color:#e8eaed">Svitlana Pustovit, Oksana<br>Hapak и ещё 13 человек<br>подняли руки.</div>
<div class="a nw" style="left:1180px;top:637px;font-size:7.4px;line-height:10px;color:#8ab4f8">Открыть очередь</div>
<svg class="a" style="left:1251.5px;top:638px" width="8" height="8"><path d="M1,1 L7,7 M7,1 L1,7" stroke="#e8eaed" stroke-width="1.2"/></svg>

<div id="taskbar" class="a"></div>
<div class="a" style="left:0;top:705px;width:148px;height:15px;background:linear-gradient(90deg,#4e4944,#514b45)"></div>
<svg class="a" style="left:5px;top:709px" width="9" height="8"><g fill="#fff"><rect x="0" y="0.3" width="4" height="3.4"/><rect x="4.6" y="0" width="4.4" height="3.7"/><rect x="0" y="4.3" width="4" height="3.4"/><rect x="4.6" y="4.3" width="4.4" height="3.7"/></g></svg>
<svg class="a" style="left:24px;top:708px" width="9" height="10"><circle cx="5.5" cy="3.8" r="2.6" fill="none" stroke="#ddd" stroke-width="1"/><path d="M3.6,5.8 L1,8.6" stroke="#ddd" stroke-width="1.1"/></svg>
<div class="a nw" style="left:37.5px;top:707px;font-size:7.2px;line-height:11px;color:#aaa39b">Поиск</div>
<svg class="a" style="left:151.7px;top:708.5px" width="9" height="8"><rect x="0.5" y="1.5" width="6" height="5" fill="none" stroke="#e8e8e8" stroke-width="1"/><path d="M8,1 V7" stroke="#e8e8e8" stroke-width="1"/><path d="M0,0.5 H7 M0,7.5 H7" stroke="#e8e8e8" stroke-width=".8"/></svg>
<div class="a" style="left:172px;top:708px;width:7px;height:9px;background:#1a1a1a;border:1px solid #777"></div>
<div class="a" style="left:190px;top:708px;width:8.6px;height:9px;border-radius:2px;background:linear-gradient(135deg,#28a8ea,#0a64c8)"></div>
<svg class="a" style="left:208px;top:708px" width="9" height="9"><path d="M6.5,0.5 L8.5,1.5 V7.5 L6.5,8.5 L2,4.5 L0.5,5.8 L0,5 V4 L0.5,3.2 L2,4.5 L6.5,0.5 Z M6.5,2.8 L4,4.5 L6.5,6.2 Z" fill="#2a9bea"/></svg>
<div class="a" style="left:229px;top:710px;width:4px;height:6px;border-radius:1px;background:#6e6358"></div>
<div class="a" style="left:244.7px;top:708px;width:9.3px;height:8.5px;border-radius:1px;background:linear-gradient(#f5c74a 0 40%,#e8a935 40%)"></div>
<div class="a" style="left:247px;top:712px;width:5px;height:3px;background:#4aa3df"></div>
<div class="a" style="left:263.4px;top:708.5px;width:8.6px;height:7.5px;border-radius:1px;background:#58b0e8"></div>
<div class="a" style="left:282px;top:708px;width:9px;height:9px;border-radius:50%;background:conic-gradient(from -30deg,#ea4335 0 33%,#34a853 0 66%,#fbbc04 0)"></div>
<div class="a" style="left:284.6px;top:710.6px;width:3.8px;height:3.8px;border-radius:50%;background:#4285f4;border:.8px solid #fff"></div>
<div class="a" style="left:301px;top:708px;width:7.8px;height:8.5px;background:#1f2a12"></div>
<div class="a" style="left:302.5px;top:710px;width:5px;height:4.5px;border-radius:50%;background:#76b900"></div>
<div class="a" style="left:319.7px;top:708px;width:8px;height:8.5px;border-radius:50%;background:#5865f2"></div>
<div class="a" style="left:332.9px;top:705px;width:80px;height:15px;background:#857b71"></div>
<div class="a" style="left:413.8px;top:705px;width:79px;height:15px;background:#75695c"></div>
<div class="a" style="left:337.5px;top:708px;width:9px;height:9px;border-radius:50%;background:conic-gradient(from -30deg,#ea4335 0 33%,#34a853 0 66%,#fbbc04 0)"></div>
<div class="a" style="left:340px;top:710.5px;width:4px;height:4px;border-radius:50%;background:#4285f4;border:.8px solid #fff"></div>
<div class="a nw" style="left:348px;top:707px;font-size:6.6px;line-height:11px;color:#f2f2f2">Meet – nzy-pphi-knr ...</div>
<div class="a" style="left:418.5px;top:708px;width:9px;height:9px;border-radius:50%;background:#2b8fd6"></div>
<div class="a" style="left:421.5px;top:711.5px;width:5.5px;height:5.5px;border-radius:50%;background:#e0332c"></div>
<div class="a nw" style="left:429px;top:707px;font-size:6.6px;line-height:11px;color:#f2f2f2">Мама♡ @ Nazar (31...</div>
<div class="a" style="left:1125.3px;top:705px;width:60px;height:15px;background:#7a6245"></div>
<div class="a" style="left:1129.6px;top:707.5px;width:10px;height:10px;border-radius:50%;background:radial-gradient(circle at 40% 40%,#ffc107,#f57c00)"></div>
<div class="a nw" style="left:1144.5px;top:707px;font-size:6.8px;line-height:11px;color:#f0ebe5">26°C &nbsp;Sunny</div>
<svg class="a" style="left:1192px;top:709px" width="7" height="5"><path d="M0.8,4.2 L3.5,1.2 L6.2,4.2" stroke="#eee" stroke-width="1" fill="none"/></svg>
<div class="a" style="left:1203px;top:708px;width:7.5px;height:8px;border:1px solid #eee"></div>
<div class="a" style="left:1208px;top:713.5px;width:3.5px;height:3.5px;border-radius:50%;background:#e32424"></div>
<div class="a nw" style="left:1216px;top:707px;font-size:6.4px;line-height:11px;color:#f0ebe5">РУС</div>
<div class="a nw" style="left:1234px;top:707px;font-size:6.4px;line-height:11px;color:#f0ebe5">18:39</div>
<svg class="a" style="left:1256px;top:708px" width="9" height="9"><path d="M0.5,0.5 H8.5 V6.5 H5.5 L4.5,8 L3.5,6.5 H0.5 Z" fill="#f5f5f5"/><path d="M2,2.5 H7 M2,4.3 H6" stroke="#7a6245" stroke-width=".8"/></svg>

</body></html>
